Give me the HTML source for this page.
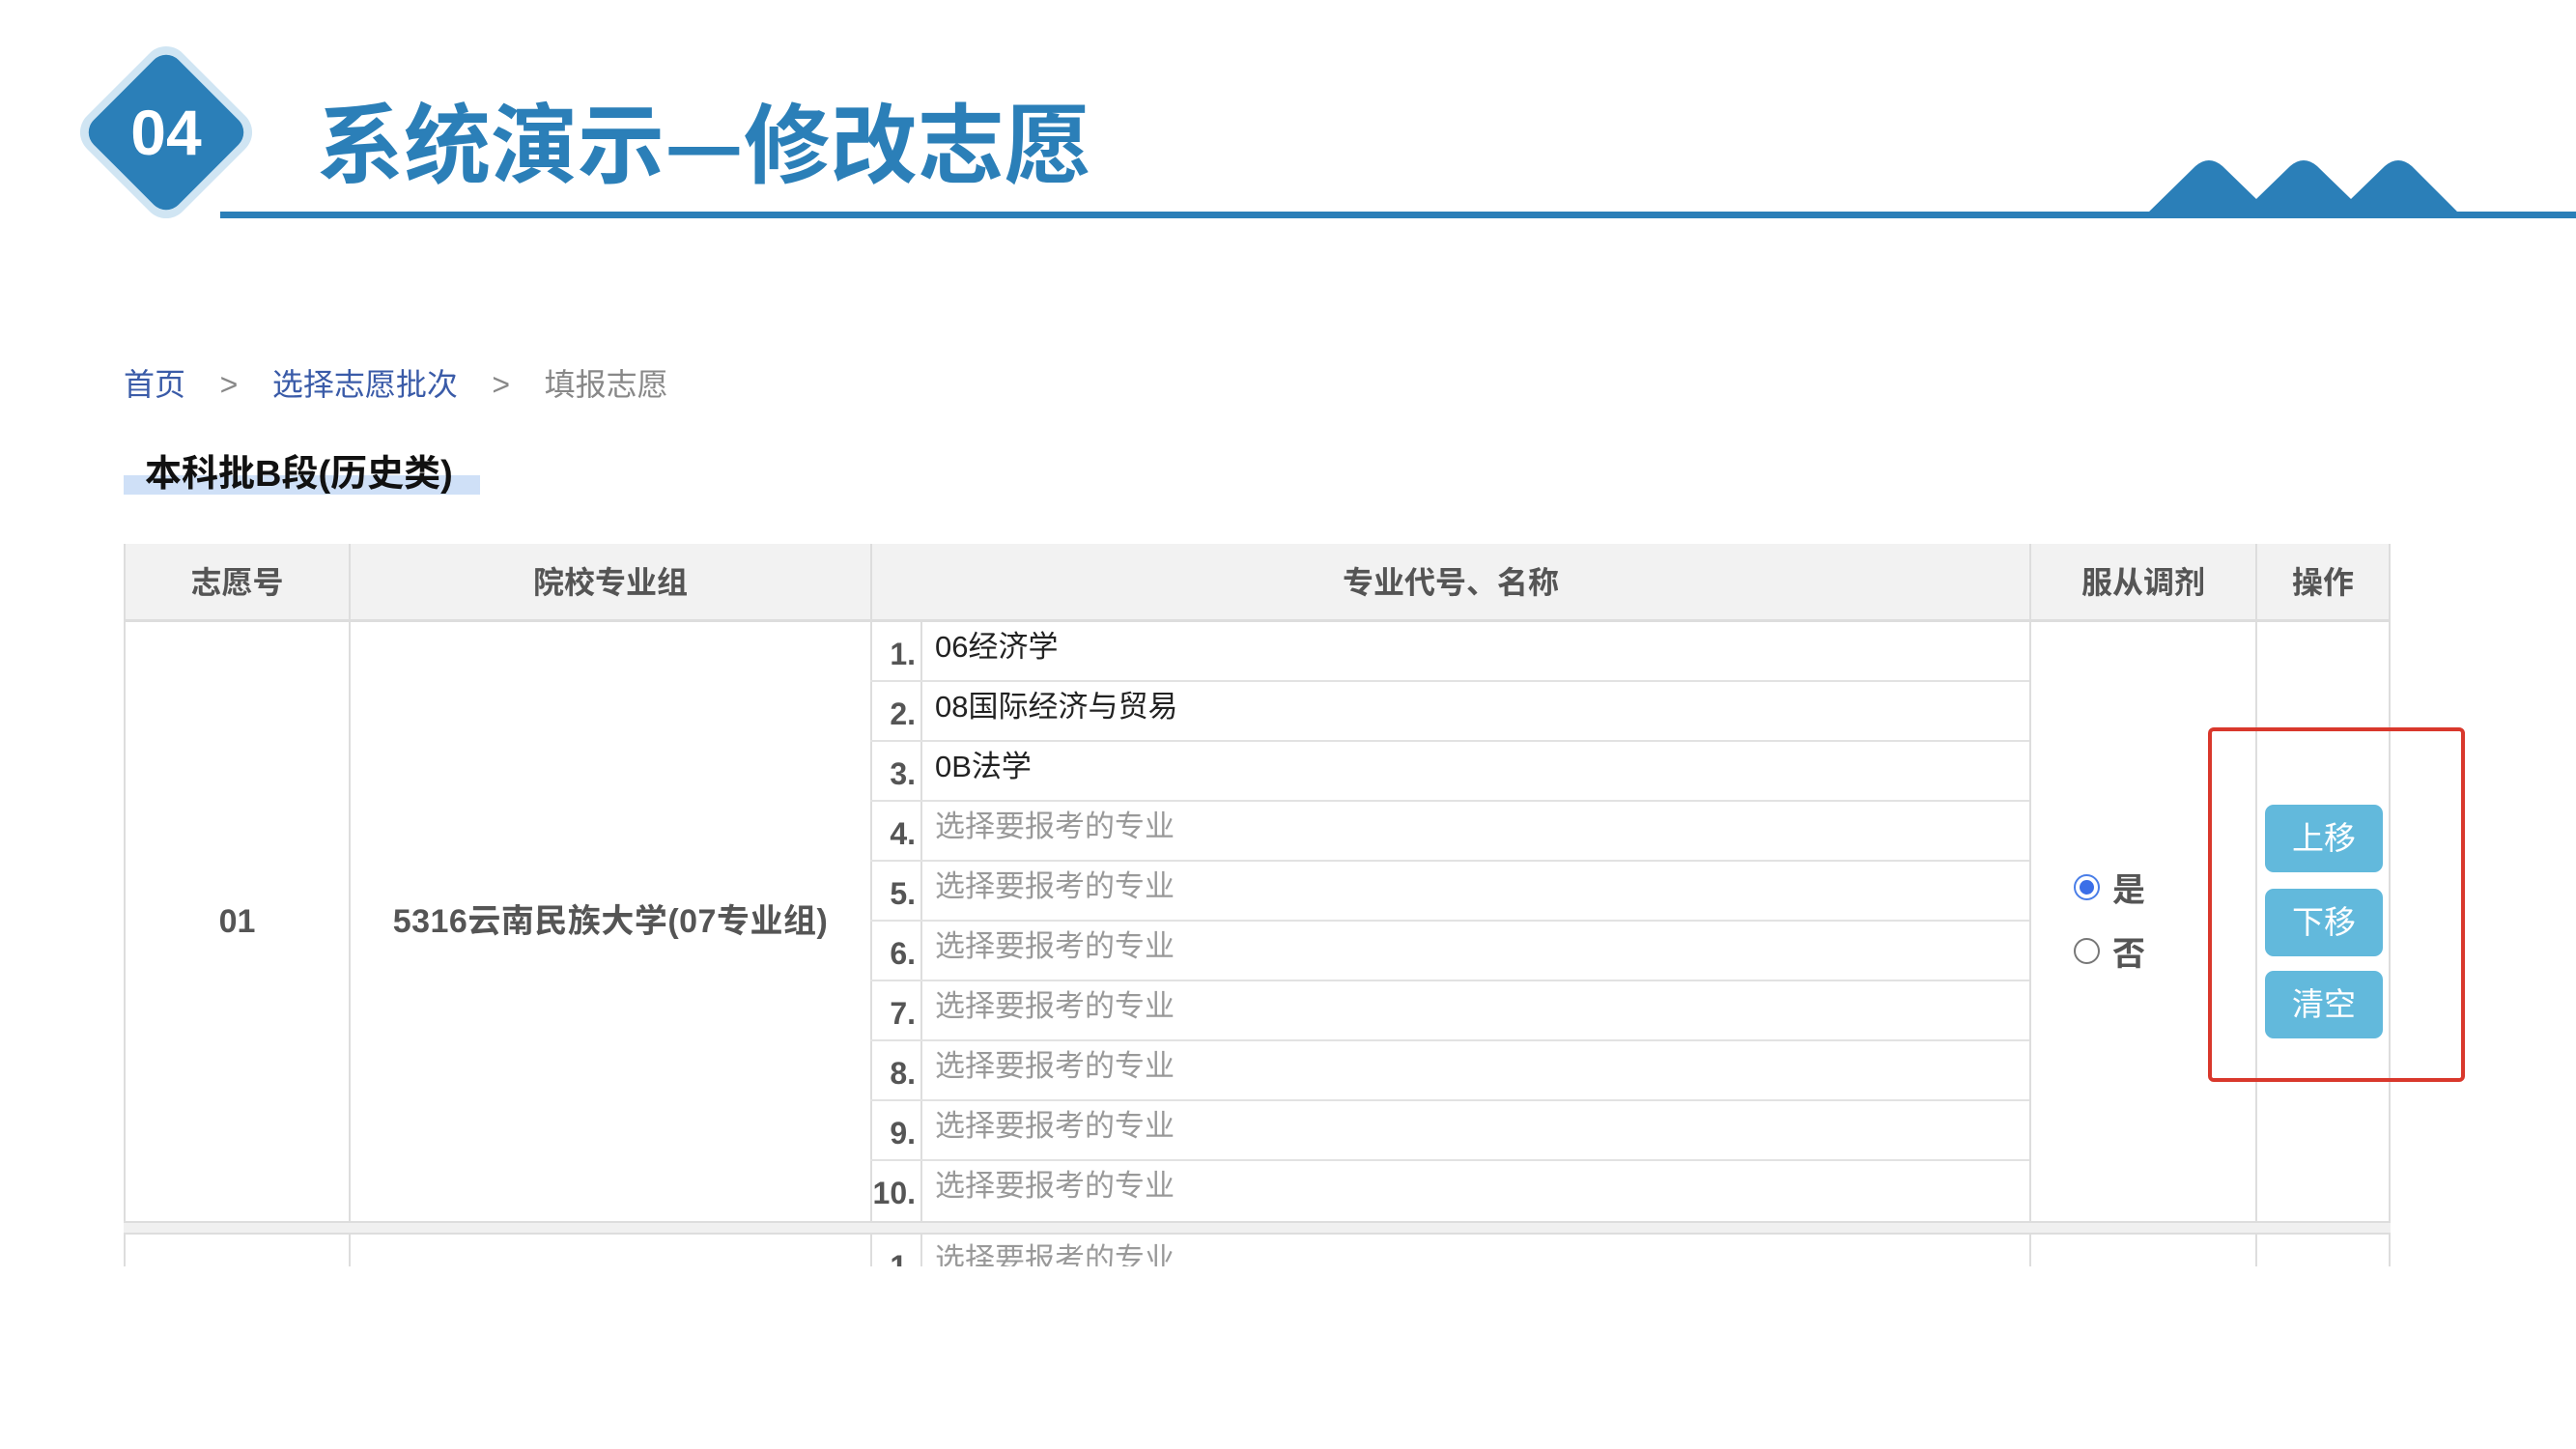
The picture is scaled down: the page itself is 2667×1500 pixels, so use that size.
<!DOCTYPE html>
<html><head><meta charset="utf-8"><style>
*{margin:0;padding:0;box-sizing:border-box}
body{width:2667px;height:1500px;background:#fff;position:relative;overflow:hidden;font-family:"Liberation Sans","Noto Sans CJK SC",sans-serif}
.a{position:absolute}
.h{position:absolute;top:563px;height:80px;line-height:80px;text-align:center;font-weight:bold;font-size:32px;color:#555;background:#f2f2f2}
.sub{position:absolute;left:901px;width:1200px;height:62px;border-bottom:2px solid #e2e2e2}
.num{position:absolute;left:0;width:53px;top:8px;text-align:right;padding-right:6px;font-weight:bold;font-size:32px;color:#555;line-height:50px}
.txt{position:absolute;left:67px;top:6px;font-size:31px;line-height:40px;color:#222}
.ph{color:#999}
.btn{position:absolute;left:2345px;width:122px;height:70px;border-radius:9px;background:#62b9dc;color:#fff;font-size:33px;line-height:70px;text-align:center}
</style></head><body>
<svg class="a" style="left:0;top:0" width="2667" height="240">
<rect x="102" y="67" width="140" height="140" rx="24" fill="#d0e5f3" transform="rotate(45 172 137)"/>
<rect x="110" y="75" width="124" height="124" rx="18" fill="#2b7fb8" transform="rotate(45 172 137)"/>
<rect x="228" y="219" width="2439" height="7" fill="#2b7fb8"/>
<path d="M2223 221 L2273 172 Q2287 160 2301 172 L2336 206 L2371 172 Q2385 160 2399 172 L2434 206 L2469 172 Q2483 160 2497 172 L2546 221 Z" fill="#2b7fb8"/>
</svg>
<div class="a" style="left:110px;top:100px;width:124px;text-align:center;color:#fff;font-weight:bold;font-size:66px;line-height:74px">04</div>
<div class="a" style="left:328px;top:88px;color:#2b7fb8;font-weight:bold;font-size:90px;line-height:110px;font-family:'Noto Sans CJK SC',sans-serif">系统演示—修改志愿</div>

<div class="a" style="left:128px;top:378px;font-size:32px;line-height:40px;color:#888;white-space:pre"><span style="color:#3a5ba8">首页</span>    &gt;    <span style="color:#3a5ba8">选择志愿批次</span>    &gt;    填报志愿</div>
<div class="a" style="left:128px;top:492px;width:369px;height:20px;background:#cfe0f7"></div>
<div class="a" style="left:150px;top:466px;font-weight:bold;font-size:38px;line-height:50px;color:#111">本科批B段(历史类)</div>

<div class="a" style="left:128px;top:563px;width:2347px;height:748px;border:2px solid #ddd;border-bottom:none"></div>
<div class="h" style="left:130px;width:231px">志愿号</div>
<div class="h" style="left:363px;width:538px">院校专业组</div>
<div class="h" style="left:903px;width:1198px">专业代号、名称</div>
<div class="h" style="left:2103px;width:232px">服从调剂</div>
<div class="h" style="left:2337px;width:136px">操作</div>
<div class="a" style="left:128px;top:641px;width:2347px;height:3px;background:#ddd"></div>
<div class="a" style="left:361px;top:563px;width:2px;height:748px;background:#ddd"></div>
<div class="a" style="left:901px;top:563px;width:2px;height:748px;background:#ddd"></div>
<div class="a" style="left:2101px;top:563px;width:2px;height:748px;background:#ddd"></div>
<div class="a" style="left:2335px;top:563px;width:2px;height:748px;background:#ddd"></div>
<div class="a" style="left:953px;top:644px;width:2px;height:667px;background:#ddd"></div>
<div class="a" style="left:128px;top:1264px;width:2347px;height:14px;background:#f0f0f0;border-top:2px solid #ddd;border-bottom:2px solid #ddd"></div>

<div class="sub" style="top:644px"><div class="num">1.</div><div class="txt">06经济学</div></div>
<div class="sub" style="top:706px"><div class="num">2.</div><div class="txt">08国际经济与贸易</div></div>
<div class="sub" style="top:768px"><div class="num">3.</div><div class="txt">0B法学</div></div>
<div class="sub" style="top:830px"><div class="num">4.</div><div class="txt ph">选择要报考的专业</div></div>
<div class="sub" style="top:892px"><div class="num">5.</div><div class="txt ph">选择要报考的专业</div></div>
<div class="sub" style="top:954px"><div class="num">6.</div><div class="txt ph">选择要报考的专业</div></div>
<div class="sub" style="top:1016px"><div class="num">7.</div><div class="txt ph">选择要报考的专业</div></div>
<div class="sub" style="top:1078px"><div class="num">8.</div><div class="txt ph">选择要报考的专业</div></div>
<div class="sub" style="top:1140px"><div class="num">9.</div><div class="txt ph">选择要报考的专业</div></div>
<div class="sub" style="top:1202px;border:none"><div class="num">10.</div><div class="txt ph">选择要报考的专业</div></div>
<div class="a" style="left:901px;top:1278px;width:1200px;height:33px;overflow:hidden"><div class="num" style="top:8px">1.</div><div class="txt ph">选择要报考的专业</div></div>
<div class="a" style="left:0;top:1311px;width:2667px;height:189px;background:#fff"></div>

<div class="a" style="left:130px;top:934px;width:231px;text-align:center;font-weight:bold;font-size:34px;color:#555;line-height:40px">01</div>
<div class="a" style="left:363px;top:934px;width:538px;text-align:center;font-weight:bold;font-size:34px;color:#555;line-height:40px;letter-spacing:0.5px">5316云南民族大学(07专业组)</div>

<div class="a" style="left:2147px;top:905px;width:27px;height:27px;border-radius:50%;border:2px solid #4a7ee8;background:#fff"></div>
<div class="a" style="left:2153px;top:911px;width:15px;height:15px;border-radius:50%;background:#3b6fe8"></div>
<div class="a" style="left:2187px;top:902px;font-weight:bold;font-size:34px;color:#555;line-height:40px">是</div>
<div class="a" style="left:2147px;top:971px;width:27px;height:27px;border-radius:50%;border:2px solid #777;background:#fff"></div>
<div class="a" style="left:2187px;top:968px;font-weight:bold;font-size:34px;color:#555;line-height:40px">否</div>

<div class="btn" style="top:833px">上移</div>
<div class="btn" style="top:920px">下移</div>
<div class="btn" style="top:1005px">清空</div>
<div class="a" style="left:2286px;top:753px;width:266px;height:367px;border:4px solid #d9382c;border-radius:6px"></div>
</body></html>
